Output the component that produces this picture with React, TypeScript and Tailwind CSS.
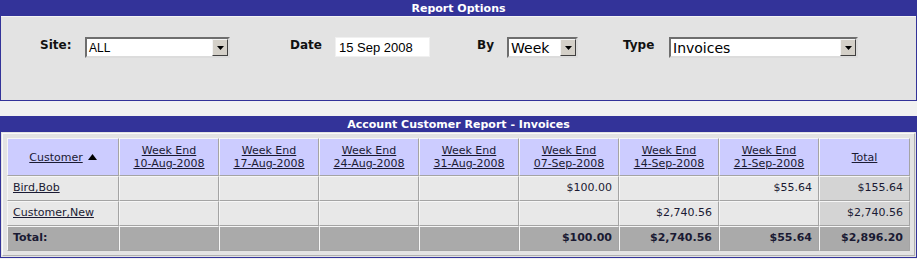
import type { ReactNode } from 'react';

const weeks = ['10-Aug-2008', '17-Aug-2008', '24-Aug-2008', '31-Aug-2008', '07-Sep-2008', '14-Sep-2008', '21-Sep-2008'];

const rows = [
  { name: 'Bird,Bob', values: ['', '', '', '', '$100.00', '', '$55.64'], total: '$155.64' },
  { name: 'Customer,New', values: ['', '', '', '', '', '$2,740.56', ''], total: '$2,740.56' },
];

const totals = ['', '', '', '', '$100.00', '$2,740.56', '$55.64'];

function DropButton() {
  return (
    <div className="flex h-[17px] w-[16px] shrink-0 items-center justify-center border border-t-[#f4f4f4] border-l-[#f4f4f4] border-r-[#404040] border-b-[#404040] bg-[#d4d0c8]">
      <svg width="7" height="4" viewBox="0 0 7 4">
        <path d="M0 0h7L3.5 4z" fill="#000" />
      </svg>
    </div>
  );
}

function Select({ width, value, font }: { width: string; value: string; font: string }) {
  return (
    <div className={`flex h-[21px] items-center border-2 border-t-[#6e6e6e] border-l-[#6e6e6e] border-r-[#dcdcdc] border-b-[#dcdcdc] bg-white pl-[2px] ${width}`}>
      <span className={`flex-1 whitespace-nowrap pt-[1px] text-black ${font}`}>{value}</span>
      <DropButton />
    </div>
  );
}

function Label({ children, className }: { children: ReactNode; className: string }) {
  return (
    <span className={`whitespace-nowrap text-[12px] font-bold leading-[16px] text-[#111] ${className}`}>{children}</span>
  );
}

function PanelHeader({ title }: { title: string }) {
  return (
    <div className="flex h-[16px] items-center justify-center bg-[#333399] text-[11px] font-bold leading-none text-white">
      {title}
    </div>
  );
}

const cell = 'border border-t-[#f6f6f6] border-l-[#f6f6f6] border-r-[#a4a4a4] border-b-[#a4a4a4]';

export default function App() {
  return (
    <div className="min-h-[259px] w-[917px] bg-[#f1f1f1] font-['DejaVu_Sans',Verdana,sans-serif]">
      {/* report options */}
      <div className="border-x border-b border-[#333399]">
        <PanelHeader title="Report Options" />
        <div className="h-[84px] border-t border-[#f4f4f4] bg-[#e3e3e3]">
          <div className="flex items-start pt-[20px]">
            <Label className="ml-[39px] w-[30px]">Site:</Label>
            <div className="ml-[15px]">
              <Select width="w-[145px]" value="ALL" font="font-['Liberation_Sans',Arial,sans-serif] text-[12px]" />
            </div>
            <Label className="ml-[60px] w-[31px]">Date</Label>
            <div className="ml-[14px] flex h-[20px] w-[95px] items-center border border-[#f0f0f0] bg-white pl-[3px] pt-[1px] font-['Liberation_Sans',Arial,sans-serif] text-[13px] text-black">
              15 Sep 2008
            </div>
            <Label className="ml-[47px] w-[17px]">By</Label>
            <div className="ml-[13px]">
              <Select width="w-[71px]" value="Week" font="text-[14px]" />
            </div>
            <Label className="ml-[45px] w-[32px]">Type</Label>
            <div className="ml-[14px]">
              <Select width="w-[189px]" value="Invoices" font="text-[14px]" />
            </div>
          </div>
        </div>
      </div>

      {/* report table */}
      <div className="mt-[15px] border-x border-b border-[#333399]">
        <PanelHeader title="Account Customer Report - Invoices" />
        <div className="bg-[#e3e3e3] p-[1px]">
          <div className="border border-t-[#fafafa] border-l-[#fafafa] border-r-[#b0b0b0] border-b-[#b0b0b0] p-[4px]">
            <table className="w-[903px] table-fixed border-separate border-spacing-0 text-[11px] text-[#1a1a33]">
              <colgroup>
                <col className="w-[112px]" />
                {weeks.map((w) => (
                  <col key={w} className="w-[100px]" />
                ))}
                <col className="w-[91px]" />
              </colgroup>
              <thead>
                <tr className="h-[38px] bg-[#ccccff] leading-[13px]">
                  <th className={`${cell} font-normal`}>
                    <span className="inline-flex items-center gap-[5px]">
                      <span className="underline">Customer</span>
                      <svg width="9" height="6" viewBox="0 0 9 6">
                        <path d="M0 6L4.5 0 9 6z" fill="#000" />
                      </svg>
                    </span>
                  </th>
                  {weeks.map((w) => (
                    <th key={w} className={`${cell} font-normal underline`}>
                      Week End
                      <br />
                      {w}
                    </th>
                  ))}
                  <th className={`${cell} font-normal underline`}>Total</th>
                </tr>
              </thead>
              <tbody>
                {rows.map((r) => (
                  <tr key={r.name} className="h-[25px]">
                    <td className={`${cell} bg-[#e8e8e8] pl-[5px] underline`}>{r.name}</td>
                    {r.values.map((v, i) => (
                      <td key={i} className={`${cell} bg-[#e8e8e8] pr-[6px] text-right`}>
                        {v}
                      </td>
                    ))}
                    <td className={`${cell} bg-[#d4d4d4] pr-[6px] text-right`}>{r.total}</td>
                  </tr>
                ))}
                <tr className="h-[25px] bg-[#aaaaaa] font-bold">
                  <td className={`${cell} pl-[5px]`}>Total:</td>
                  {totals.map((v, i) => (
                    <td key={i} className={`${cell} pr-[6px] text-right`}>
                      {v}
                    </td>
                  ))}
                  <td className={`${cell} pr-[6px] text-right`}>$2,896.20</td>
                </tr>
              </tbody>
            </table>
          </div>
        </div>
      </div>
    </div>
  );
}
